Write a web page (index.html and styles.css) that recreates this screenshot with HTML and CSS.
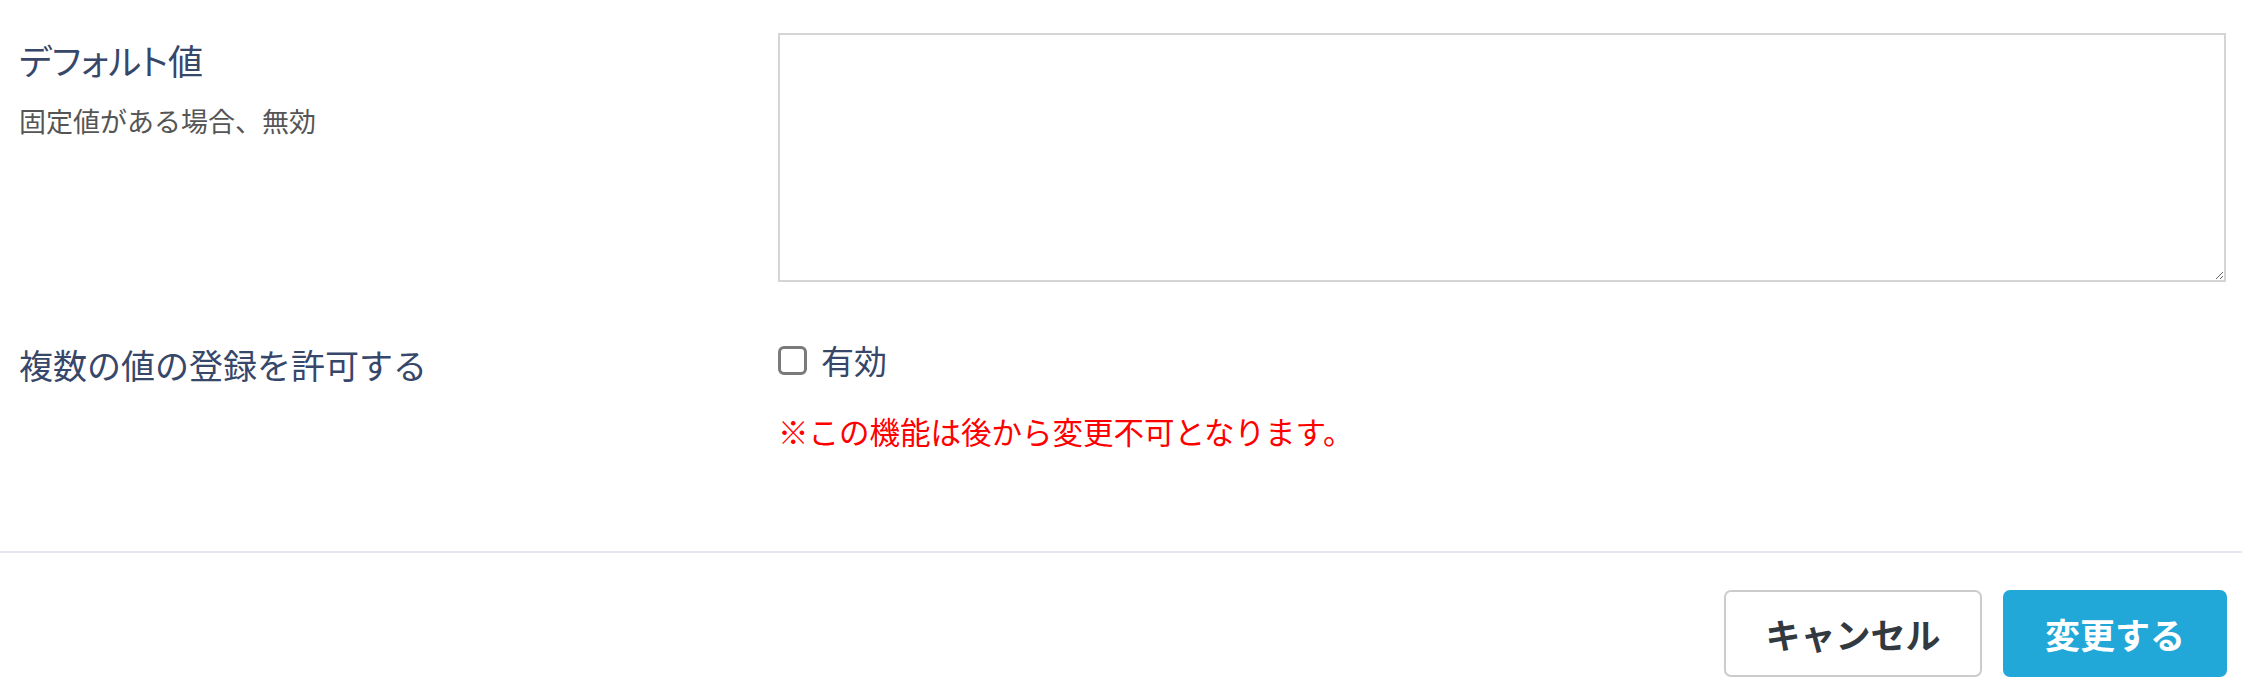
FILE: index.html
```html
<!DOCTYPE html>
<html lang="ja">
<head>
<meta charset="utf-8">
<title>設定</title>
<link rel="stylesheet" href="styles.css">
</head>
<body>
<div class="form">
  <div class="row row--default">
    <div class="label-col">
      <div class="label label--kana">デフォルト値</div>
      <div class="sub">固定値がある場合、無効</div>
    </div>
    <div class="field-col">
      <textarea class="textarea"></textarea>
    </div>
  </div>
  <div class="row row--multi">
    <div class="label-col">
      <div class="label label--multi">複数の値の登録を許可する</div>
    </div>
    <div class="field-col">
      <label class="check">
        <input type="checkbox" class="check__box">
        <span class="check__text">有効</span>
      </label>
      <div class="warn">※この機能は後から変更不可となります。</div>
    </div>
  </div>
</div>
<div class="footer">
  <button class="btn btn--cancel" type="button">キャンセル</button>
  <button class="btn btn--primary" type="button">変更する</button>
</div>
</body>
</html>
```

FILE: styles.css
```css
html, body {
  margin: 0;
  padding: 0;
  background: #ffffff;
}

body {
  font-family: "Noto Sans CJK JP", "Noto Sans", sans-serif;
  color: #37476a;
}

.form {
  padding: 33px 16px 0 19px;
}

.row {
  display: grid;
  grid-template-columns: 759px 1fr;
}

.row--multi {
  padding-top: 57px;
  padding-bottom: 99px;
}

.label {
  font-size: 34px;
  line-height: 1.3;
  color: #37476a;
}

.label--kana {
  margin-top: 4px;
  font-size: 35px;
  font-feature-settings: "palt";
}

.label--multi {
  margin-top: 4px;
}

.sub {
  margin-top: 20px;
  font-size: 27px;
  line-height: 1.3;
  color: #555555;
}

.textarea {
  display: block;
  box-sizing: border-box;
  width: 100%;
  height: 249px;
  margin: 0;
  border: 2px solid #d5d5d5;
  border-radius: 0;
  background: #ffffff;
  resize: both;
}

.check {
  display: flex;
  align-items: center;
  gap: 14px;
}

.check__box {
  appearance: none;
  -webkit-appearance: none;
  box-sizing: border-box;
  width: 29px;
  height: 29px;
  margin: 0;
  border: 3px solid #7a7a7a;
  border-radius: 6px;
  background: #ffffff;
}

.check__text {
  font-size: 33px;
  line-height: 1.3;
  color: #37476a;
}

.warn {
  margin-top: 30px;
  font-size: 30.5px;
  line-height: 1.3;
  color: #ff0000;
}

.footer {
  border-top: 2px solid #e3e6ee;
  padding: 37px 15px 0 0;
  display: flex;
  justify-content: flex-end;
  gap: 21px;
}

.btn {
  box-sizing: border-box;
  height: 87px;
  border-radius: 7px;
  font-family: "Noto Sans CJK JP", "Noto Sans", sans-serif;
  font-size: 35px;
  font-weight: 700;
  padding: 0;
  cursor: pointer;
}

.btn--cancel {
  width: 258px;
  background: #ffffff;
  border: 2px solid #cccccc;
  color: #333a3f;
}

.btn--primary {
  width: 224px;
  background: #22a8d8;
  border: 2px solid #22a8d8;
  color: #ffffff;
}
```
